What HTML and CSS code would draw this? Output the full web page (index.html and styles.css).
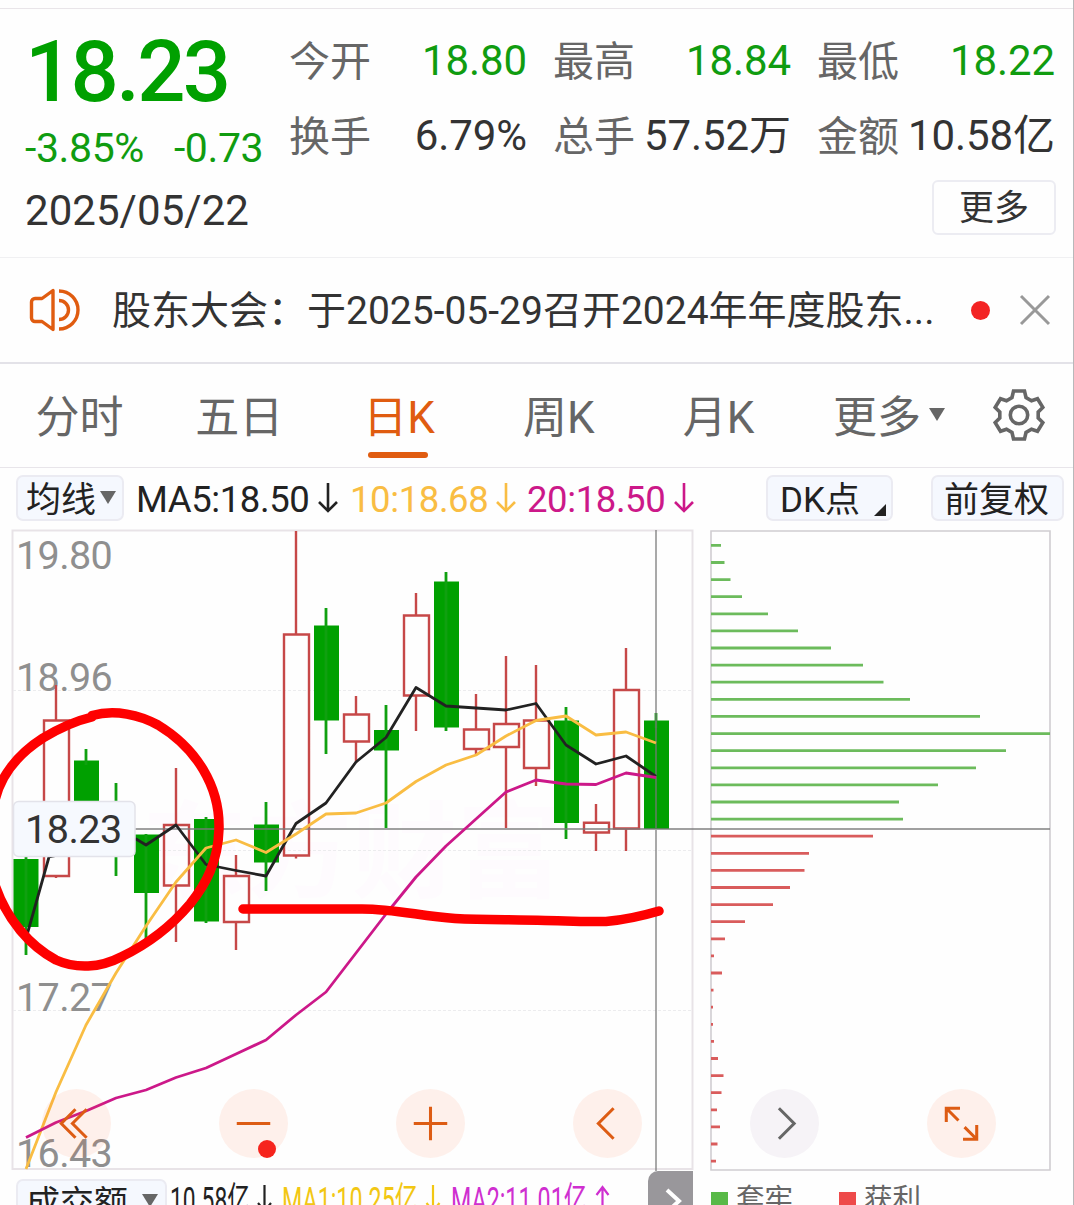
FILE: index.html
```html
<!DOCTYPE html>
<html lang="zh-CN">
<head>
<meta charset="utf-8">
<title>18.23 日K</title>
<link rel="stylesheet" href="styles.css">
</head>
<body>
<main class="page">
  <section class="quote">
    <div class="quote-main">
      <div class="price">18.23</div>
      <div class="change"><span>-3.85%</span><span>-0.73</span></div>
      <div class="date">2025/05/22</div>
    </div>
    <div class="quote-side">
      <dl class="stats">
        <div class="stat"><dt>今开</dt><dd class="down">18.80</dd></div>
        <div class="stat"><dt>最高</dt><dd class="down">18.84</dd></div>
        <div class="stat"><dt>最低</dt><dd class="down">18.22</dd></div>
        <div class="stat"><dt>换手</dt><dd>6.79%</dd></div>
        <div class="stat"><dt>总手</dt><dd>57.52万</dd></div>
        <div class="stat"><dt>金额</dt><dd>10.58亿</dd></div>
      </dl>
      <button class="more">更多</button>
    </div>
  </section>

  <section class="news">
    <svg class="speaker" width="54" height="46" viewBox="0 0 54 46" fill="none" stroke="#e05c10" stroke-width="3.4">
      <path d="M25 3.500v39L14 34.500H7a3.500 3.500 0 0 1-3.500-3.500V15a3.500 3.500 0 0 1 3.500-3.500h7z" stroke-linejoin="round"/>
      <path d="M31 13.500a9.500 9.500 0 0 1 0 19M31 4a19 19 0 0 1 0 38"/>
    </svg>
    <div class="news-text">股东大会：于2025-05-29召开2024年年度股东...</div>
    <span class="dot"></span>
    <svg class="close" width="32" height="32" viewBox="0 0 32 32" fill="none" stroke="#999" stroke-width="3"><path d="M2 2l28 28M30 2L2 30"/></svg>
  </section>

  <nav class="tabs">
    <span class="tab">分时</span>
    <span class="tab">五日</span>
    <span class="tab active">日K</span>
    <span class="tab">周K</span>
    <span class="tab">月K</span>
    <span class="tab tab-more">更多<i class="caret"></i></span>
    <svg class="gear" width="52" height="54" viewBox="-26 -27 52 54" fill="none" stroke="#666" stroke-width="3.600">
      <path d="M-5.500-24H5.500L7-17.500L12.500-14.300L18.500-16.300L23.800-7.600L19.200-2.900V2.900L23.800 7.600L18.500 16.300L12.500 14.300L7 17.500L5.500 24H-5.500L-7 17.500L-12.500 14.300L-18.500 16.300L-23.800 7.600L-19.200 2.900V-2.900L-23.800-7.600L-18.500-16.300L-12.500-14.300L-7-17.500Z"/>
      <circle r="8.700"/>
    </svg>
  </nav>

  <section class="toolbar">
    <button class="chip chip-ma"><span>均线</span><i class="caret"></i></button>
    <div class="averages">
      <span class="ma ma5"><b>MA5:18.50</b><svg width="20" height="30" viewBox="0 0 20 30"><path d="M10 0V28M1 19L10 28L19 19"/></svg></span>
      <span class="ma ma10"><b>10:18.68</b><svg width="20" height="30" viewBox="0 0 20 30"><path d="M10 0V28M1 19L10 28L19 19"/></svg></span>
      <span class="ma ma20"><b>20:18.50</b><svg width="20" height="30" viewBox="0 0 20 30"><path d="M10 0V28M1 19L10 28L19 19"/></svg></span>
    </div>
    <button class="chip chip-dk"><span>DK点</span><i class="corner"></i></button>
    <button class="chip chip-fq"><span>前复权</span></button>
  </section>

  <section class="chart">
    <svg class="plot" width="1074" height="642" viewBox="0 529 1074 642">
      <text class="watermark" x="142" y="889">东方财富</text>
      <g class="frame">
        <path d="M12.500 530.500H692.500V1169H12.500Z"/>
        <path class="grid" d="M13 690.500H692M13 850.500H692M13 1010.500H692"/>
        <path class="frame-side" d="M711 531H1050V1170H711Z"/>
      </g>
      <g class="axis">
        <text x="16" y="568.500">19.80</text>
        <text x="16" y="690.500">18.96</text>
        <text x="16" y="1010.500">17.27</text>
        <text x="16" y="1166.500">16.43</text>
      </g>
      <!-- rising candles -->
      <path class="rise" d="M56 685V720M56 876V878M44 720.500H69V876H44ZM176 768V825M176 886V942M164 825H189V885.500H164ZM236 855V876M236 922V950M224 876H249V922H224ZM296 531V634M296 856V858.500M284 634.500H309V855.500H284ZM356 696V714M356 741V763M344 714.500H369V741.500H344ZM416 593V615M416 695V731M404 615.500H429V695.500H404ZM476 694V730M476 749V754M464 729.500H489V749H464ZM506 656V724M506 747V828M494 724H519V747H494ZM536 665V720M536 768V786M524 720.500H549V768H524ZM596 804V823M596 832V851M584 822.800H609V832.500H584ZM626 648V690M626 828V851M614 690H639V828.500H614Z"/>
      <!-- falling candles -->
      <path class="fall" d="M13.500 859h25v68h-25zM74 760.500h25v70h-25zM104 812h25v35h-25zM134 834.500h25v58.500h-25zM194 819h25v102.500h-25zM254 824.500h25v38h-25zM314 625.500h25v95h-25zM374 730h25v20.500h-25zM434 581.500h25v146h-25zM554 720.500h25v102.500h-25zM644 720.500h25v108.500h-25z"/>
      <path class="fall-wick" d="M26 850V955M86 749V765M116 783V876M146 834V942M206 817V923M266 802V891M326 608V754M386 705V828M446 572V731M566 707V839M656 713V728"/>
      <!-- crosshair -->
      <path class="cross" d="M13 829H1050M656 530V1171"/>
      <!-- cost distribution -->
      <path class="trapped" d="M711 545.400H721M711 562.500H724.500M711 579.600H730.500M711 596.700H742M711 613.800H768M711 630.900H798M711 648H831M711 665.100H863M711 682.200H883.500M711 699.300H910M711 716.400H980M711 733.600H1050M711 750.700H1006M711 767.800H976M711 784.900H938M711 802H899M711 819.100H903"/>
      <path class="profit" d="M711 836.200H873M711 853.300H809M711 870.400H804.500M711 887.500H790M711 904.600H773M711 921.700H745M711 938.800H725M711 955.900H714M711 973H722M711 990.100H713.500M711 1007.200H713M711 1024.300H713M711 1041.400H714M711 1058.500H718M711 1075.600H723.500M711 1092.700H721.500M711 1109.800H717M711 1126.900H720M711 1144H717.500M711 1161.100H716"/>
      <!-- moving averages -->
      <polyline class="line ma5" points="27,935 49,857 136,839 146,845 176,825 206,864.500 236,870.500 266,876 296,823.500 326,803 356,762 386,737.500 416,687.500 446,706 506,710 536,703.500 566,745 596,764 626,756 656,776.500"/>
      <polyline class="line ma10" points="26,1169 56,1092 86,1025 116,973 146,926 176,882 206,848 236,840 266,852.500 296,834 326,814 356,813 386,803 416,781.500 446,765 476,755 506,736 536,720.500 566,716 596,735 626,732 656,743"/>
      <polyline class="line ma20" points="26,1137.500 56,1122.500 86,1111 116,1098 146,1090 176,1077.500 206,1068 236,1054 266,1040 296,1015 326,992 356,953 386,914 416,877 446,846 476,819 506,792 536,780 566,784 596,784.500 626,773 656,777.500"/>
      <rect class="tag" x="13.500" y="801.500" width="121.500" height="55" rx="5"/>
      <text class="tag-text" x="25" y="842.500">18.23</text>
      <!-- hand-drawn marks -->
      <path class="mark" d="M-6 805C-1 777 18 754 43 738C58 729 75 721 92 717M92 715.500C115 709 140 715 158 725C196 748 220 786 219 829C218 862 206 884 190 904C168 930 144 946 121 957C100 968 76 969 56 960C30 946 7 920 -5 885"/>
      <path class="mark" d="M243 909H362C395 909 420 916 455 918.500C485 920 510 919.500 545 920.500C575 921 590 922 606 921.500C624 920 642 916 659 911"/>
    </svg>
    <div class="controls">
      <span class="ctl"><svg viewBox="-34 -34 68 68"><path d="M-1-14L-15 0L-1 14M10-14L-4 0L10 14"/></svg></span>
      <span class="ctl has-dot"><svg viewBox="-34 -34 68 68"><path d="M-16.500 0H16.500"/></svg></span>
      <span class="ctl"><svg viewBox="-34 -34 68 68"><path d="M-16.500 0H16.500M0-16.500V16.500"/></svg></span>
      <span class="ctl"><svg viewBox="-34 -34 68 68"><path d="M6-15L-9 0L6 15"/></svg></span>
      <span class="ctl muted"><svg viewBox="-34 -34 68 68"><path d="M-5.500-15L9.500 0L-5.500 15"/></svg></span>
      <span class="ctl"><svg viewBox="-34 -34 68 68"><path d="M-15-1.500V-15H-1.500M-15-15L-3-3M3 3.500L15 15.500M1.500 15.500H15V1.500"/></svg></span>
    </div>
  </section>

  <footer class="volume">
    <button class="chip chip-vol"><span>成交额</span><i class="caret"></i></button>
    <svg class="vol-values" width="440" height="40" viewBox="170 1175 440 40">
      <g fill="#222"><text x="170" y="1213" textLength="80" lengthAdjust="spacingAndGlyphs">10.58亿</text></g>
      <g fill="#f2c713"><text x="282" y="1213" textLength="136" lengthAdjust="spacingAndGlyphs">MA1:10.25亿</text></g>
      <g fill="#cf2fd0"><text x="451" y="1213" textLength="136" lengthAdjust="spacingAndGlyphs">MA2:11.01亿</text></g>
      <path stroke="#222" d="M264.500 1185V1210M258 1203L264.500 1211L271 1203"/>
      <path stroke="#f2c713" d="M433 1185V1210M426.500 1203L433 1211L439.500 1203"/>
      <path stroke="#cf2fd0" d="M602.500 1212V1187M596.500 1195L602.500 1187L608.500 1195"/>
    </svg>
    <span class="next"><svg width="18" height="26" viewBox="0 0 18 26" fill="none" stroke="#fff" stroke-width="4"><path d="M2 2L14 13L2 24"/></svg></span>
    <span class="legend legend-trapped">套牢</span>
    <span class="legend legend-profit">获利</span>
  </footer>
</main>
</body>
</html>
```
FILE: styles.css
```css
* { box-sizing: border-box; }

body {
  margin: 0;
  background: #fefefe;
  font-family: Roboto, "Noto Sans CJK SC", sans-serif;
  color: #333;
}

button {
  font: inherit;
  color: inherit;
  padding: 0;
  margin: 0;
}

.page {
  width: 1074px;
  height: 1205px;
  overflow: hidden;
  padding-top: 8px;
  border-right: 1px solid #b8b8ba;
  display: flex;
  flex-direction: column;
}

.page > * { flex: none; }

/* quote header */
.quote {
  height: 250px;
  border-top: 1px solid #e9e5e9;
  border-bottom: 1px solid #f0f0f2;
  display: flex;
}

.quote-main {
  width: 289px;
  padding: 17px 0 0 25px;
}

.price {
  height: 92px;
  line-height: 92px;
  font-size: 85px;
  font-weight: 500;
  letter-spacing: -2.700px;
  color: #00a000;
}

.change {
  display: flex;
  gap: 30px;
  height: 60px;
  line-height: 60px;
  font-size: 41px;
  letter-spacing: -0.400px;
  color: #109c10;
}

.date {
  height: 64px;
  line-height: 65px;
  font-size: 42px;
  letter-spacing: 0.050px;
}

.quote-side {
  width: 767px;
  display: flex;
  flex-direction: column;
  align-items: flex-end;
}

.stats {
  width: 766px;
  margin: 13px 1px 0 0;
  display: grid;
  grid-template-columns: repeat(3, 238px);
  grid-auto-rows: 75px;
  column-gap: 26px;
}

.stat {
  display: flex;
  justify-content: space-between;
  white-space: nowrap;
}

.stat dt { font-size: 41px; line-height: 81px; color: #666; }
.stat dd { margin: 0; font-size: 42px; line-height: 77px; letter-spacing: -0.100px; }
.stat .down { color: #109c10; }

.more {
  width: 124px;
  height: 55px;
  margin-top: 8px;
  padding-top: 3px;
  line-height: 48px;
  font-size: 35px;
  background: #fefefe;
  border: 2px solid #ececf2;
  border-radius: 6px;
}

/* announcement */
.news {
  height: 106px;
  border-bottom: 2px solid #e3e2e8;
  padding-left: 28px;
  display: flex;
  align-items: center;
}

.news-text {
  width: 832px;
  margin-left: 30px;
  padding-top: 2px;
  font-size: 39px;
  line-height: 60px;
  white-space: nowrap;
}

.dot {
  width: 19px;
  height: 19px;
  margin-left: 27px;
  border-radius: 50%;
  background: #f32323;
}

.close { margin-left: 29px; }

/* period tabs */
.tabs {
  height: 104px;
  border-bottom: 1px solid #e8e5ea;
  padding-bottom: 2px;
  display: grid;
  grid-template-columns: repeat(5, 159.800px) 190px 52px;
  align-items: center;
}

.tab {
  position: relative;
  padding: 6px 1px 0 0;
  text-align: center;
  font-size: 44px;
  line-height: 60px;
  color: #666;
}

.tab.active { color: #e05c10; }

.tab.active::after {
  content: "";
  position: absolute;
  left: 48.500px;
  top: 70px;
  width: 60px;
  height: 6px;
  border-radius: 3px;
  background: #e05c10;
}

.tab-more {
  display: flex;
  align-items: center;
  padding-left: 34px;
  gap: 8px;
}

.caret {
  border: 8px solid transparent;
  border-top: 13px solid #666;
  border-bottom: 0;
}

.tab-more .caret { margin-bottom: 6px; }

.gear { margin-left: 4px; }

/* chart toolbar */
.toolbar {
  height: 61px;
  display: flex;
  align-items: center;
  padding: 0 0 2px 16px;
}

.chip {
  height: 46px;
  line-height: 42px;
  font-size: 35px;
  color: #222;
  background: #f5f8fe;
  border: 2px solid #ebebf2;
  border-radius: 7px;
  display: flex;
  align-items: center;
  white-space: nowrap;
}

.chip span { padding-top: 6px; }

.chip-ma { width: 108px; padding-left: 8px; gap: 4px; }

.averages {
  width: 630px;
  margin-left: 12px;
  display: flex;
  font-size: 36.500px;
  line-height: 46px;
}

.ma { display: flex; align-items: center; justify-content: space-between; color: var(--c); }
.ma b { padding-top: 4px; font-weight: 400; letter-spacing: -0.400px; }
.ma svg { fill: none; stroke: var(--c); stroke-width: 2.600; }
.ma5 { --c: #222; width: 202px; margin-right: 12px; }
.ma10 { --c: #f9bd43; width: 166px; margin-right: 11px; }
.ma20 { --c: #cc1889; width: 167px; }

.chip-dk { position: relative; width: 127px; padding-left: 12px; }

.corner {
  position: absolute;
  right: 5px;
  bottom: 3px;
  border-left: 12px solid transparent;
  border-bottom: 12px solid #222;
}

.chip-fq { width: 133px; margin-left: 38px; padding-left: 11px; }

/* chart */
.chart { position: relative; height: 642px; }
.plot { display: block; }

.watermark { font-size: 105px; font-weight: 700; fill: #fefbfe; }

.frame path { fill: none; stroke: #e8e3e7; stroke-width: 2; }
.frame .grid { stroke: #ececee; stroke-width: 1; stroke-dasharray: 3 2; }
.frame .frame-side { stroke: #d0cdd1; stroke-width: 1.600; }

.axis text { font-size: 39.500px; letter-spacing: -0.600px; fill: #8f8f8f; }

.rise { fill: none; stroke: #c64848; stroke-width: 2.400; }
.fall { fill: #00a000; }
.fall-wick { fill: none; stroke: #10a010; stroke-width: 2.800; }
.cross { fill: none; stroke: #777; stroke-opacity: 0.700; stroke-width: 1.800; }

.trapped { stroke: #6cbb5c; stroke-width: 2.800; }
.profit { stroke: #d95c5c; stroke-width: 2.800; }

.line { fill: none; stroke: var(--c); stroke-width: 2.800; stroke-linejoin: round; }

.tag { fill: #f6f9fe; stroke: #e3e3ea; stroke-width: 1.500; }
.tag-text { font-size: 39.500px; letter-spacing: -0.500px; fill: #333; }

.mark { fill: none; stroke: #fe0000; stroke-width: 9.500; stroke-linecap: round; stroke-linejoin: round; }

.controls {
  position: absolute;
  left: 42px;
  top: 560px;
  display: flex;
  gap: 108px;
}

.ctl {
  position: relative;
  width: 69px;
  height: 69px;
  border-radius: 50%;
  background: rgba(255, 95, 35, 0.085);
}

.ctl svg { display: block; fill: none; stroke: #dd5c14; stroke-width: 3; }
.ctl.muted { background: #f6f3f7; }
.ctl.muted svg { stroke: #666; }

.has-dot::after {
  content: "";
  position: absolute;
  left: 38.500px;
  top: 51px;
  width: 18px;
  height: 18px;
  border-radius: 50%;
  background: #f6241d;
}

/* volume strip, cut off by the bottom of the view */
.volume {
  height: 34px;
  overflow: hidden;
  display: flex;
  align-items: flex-start;
  padding-left: 16px;
}

.chip-vol { width: 151px; margin-top: 8px; padding-left: 8px; gap: 14px; font-size: 34px; }
.chip-vol span { padding-top: 1px; }
.chip-vol .caret { margin-bottom: 3px; }

.vol-values { margin: 4px 0 0 3px; fill: none; stroke-width: 2.200; }
.vol-values text { font-size: 36px; }

.next {
  width: 45px;
  height: 50px;
  margin-left: 38px;
  padding: 17px 0 0 17px;
  border-top-left-radius: 10px;
  background: #99979b;
}

.legend {
  display: flex;
  align-items: center;
  gap: 8px;
  height: 40px;
  margin-top: 9px;
  font-size: 28.500px;
  line-height: 40px;
  color: #666;
}

.legend::before {
  content: "";
  width: 17px;
  height: 17px;
  background: var(--c);
}

.legend-trapped { --c: #58b947; margin-left: 18px; }
.legend-profit { --c: #ee4a4a; margin-left: 46px; }
```
